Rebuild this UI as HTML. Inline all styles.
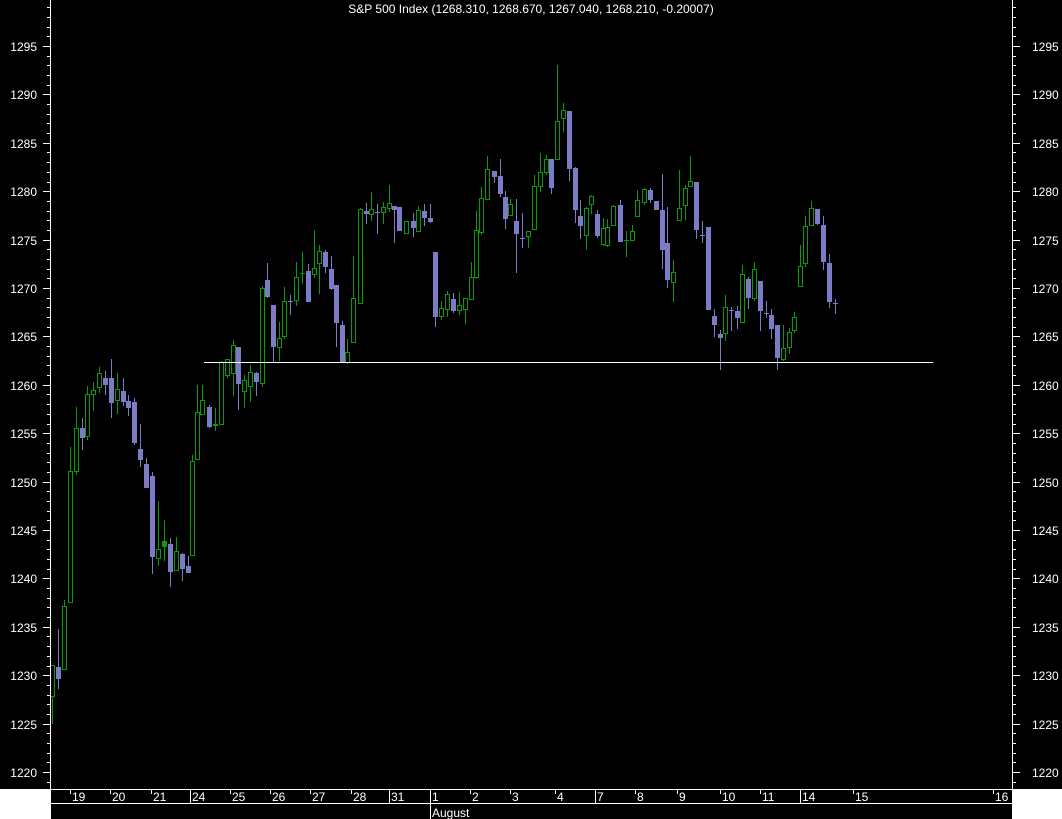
<!DOCTYPE html>
<html><head><meta charset="utf-8"><style>
html,body{margin:0;padding:0;background:#fff;}
svg{display:block;font-family:"Liberation Sans",sans-serif;}
</style></head><body>
<svg id="s" width="1062" height="819" xmlns="http://www.w3.org/2000/svg">
<rect x="0" y="0" width="1062" height="789" fill="#000"/>
<rect x="50" y="789" width="962" height="30" fill="#000"/>
<text x="531" y="13" fill="#fff" font-size="12" text-anchor="middle">S&amp;P 500 Index (1268.310, 1268.670, 1267.040, 1268.210, -0.20007)</text>
<g id="ax" stroke="#fff" stroke-width="1"></g>
<g id="lb" fill="#fff" font-size="12"></g>
<g id="cd"></g>
<line x1="204" y1="362.5" x2="933" y2="362.5" stroke="#fff" stroke-width="1"/>
<g stroke="#fff" stroke-width="1">
<line x1="50" y1="789.5" x2="1012" y2="789.5"/>
<line x1="50" y1="803.5" x2="1012" y2="803.5"/>
<line x1="50.5" y1="0" x2="50.5" y2="819"/>
<line x1="1012.5" y1="0" x2="1012.5" y2="803"/>
</g>
<g id="dt" fill="#fff" font-size="12"></g>
</svg>
<script>
var NS="http://www.w3.org/2000/svg";
function el(p,t,a,txt){var e=document.createElementNS(NS,t);for(var k in a)e.setAttribute(k,a[k]);if(txt!=null)e.textContent=txt;document.getElementById(p).appendChild(e);return e;}
// price axis
for(var p=1299;p>=1219;p--){var y=Math.round(46+(1295-p)*9.68)+0.5;if(y>788)continue;var maj=(p%5==0);
el("ax","line",{x1:maj?43:47,y1:y,x2:50,y2:y});el("ax","line",{x1:1012,y1:y,x2:maj?1020:1016,y2:y});
if(maj){el("lb","text",{x:37,y:y+4.5,"text-anchor":"end"},p);el("lb","text",{x:1032,y:y+4.5},p);}}
// dates
var d=[[70,"19",0],[110,"20",0],[151,"21",0],[190,"24",1],[230,"25",0],[270,"26",0],[310,"27",0],[351,"28",0],[389,"31",1],[430,"1",2],[470,"2",0],[510,"3",0],[555,"4",0],[595,"7",1],[635,"8",0],[677,"9",0],[720,"10",0],[760,"11",0],[800,"14",1],[853,"15",0],[993,"16",0]];
d.forEach(function(a){var x=a[0]+0.5;el("ax","line",{x1:x,y1:789,x2:x,y2:a[2]==2?819:(a[2]==1?803:794)});el("dt","text",{x:a[0]+2,y:801},a[1]);});
el("dt","text",{x:432,y:817},"August");
// candles: x, wickTop, wickBot, bodyTop, bodyBot, type(g/p/t=tick)
var C=[
[52,665,724,665,696,"g"],[58,629,689,667,679,"p"],[64,600,669,606,669,"g"],[70,447,602,471,602,"g"],[76,407,475,428,471,"g"],[82,418,450,428,438,"p"],[87,386,440,394,436,"g"],[93,382,411,390,394,"g"],[99,367,393,373,387,"g"],[105,371,395,378,385,"p"],[111,359,418,378,403,"p"],[117,373,414,389,400,"g"],[123,378,406,391,402,"p"],[128,395,416,401,408,"p"],[134,398,445,402,443,"p"],[140,424,467,449,460,"p"],[146,458,488,464,488,"p"],[152,472,574,476,557,"p"],[158,501,566,549,558,"g"],[164,520,561,541,547,"G"],[170,538,587,544,572,"p"],[176,537,571,551,570,"g"],[182,553,581,554,569,"p"],[188,556,573,566,573,"p"],[192,455,555,461,555,"g"],[197,385,460,412,459,"g"],[202,385,415,400,414,"g"],[209,405,428,407,427,"p"],[215,408,431,424,425,"g"],[221,361,425,362,424,"g"],[227,359,378,359,375,"g"],[233,340,396,345,373,"g"],[238,347,410,347,384,"p"],[244,375,408,380,391,"g"],[250,365,402,372,386,"g"],[256,372,396,373,382,"p"],
[262,286,387,288,383,"g"],[267,263,298,280,297,"p"],[273,305,363,305,347,"p"],[279,322,361,338,347,"g"],[284,287,339,301,336,"g"],[290,295,315,301,301,"t"],[296,262,306,277,300,"g"],[302,252,284,273,273,"tg"],[308,264,302,271,302,"p"],[314,230,278,268,274,"g"],[319,245,294,251,263,"g"],[325,250,273,252,267,"p"],[331,256,290,269,289,"p"],[336,285,347,285,323,"p"],[342,321,362,325,362,"p"],[347,339,364,352,362,"g"],[353,256,343,298,342,"g"],[360,208,303,209,303,"g"],[366,203,224,211,214,"p"],[371,192,221,209,214,"g"],[377,204,234,212,212,"t"],[383,202,224,207,212,"g"],[389,185,212,203,208,"g"],[394,206,243,206,210,"p"],[399,207,231,207,231,"p"],[406,221,233,221,233,"g"],[413,213,237,221,228,"p"],[418,206,232,210,231,"g"],[424,204,226,211,218,"p"],[430,204,223,218,222,"p"],
[435,252,327,252,317,"p"],[441,301,320,308,316,"g"],[447,291,317,294,309,"g"],[453,293,313,299,311,"p"],[459,292,315,305,310,"g"],[465,302,324,298,309,"g"],[471,262,300,277,299,"g"],[476,211,279,230,277,"g"],[481,187,235,198,232,"g"],[487,156,200,169,199,"g"],[494,171,183,171,177,"p"],[500,159,197,176,194,"p"],[505,191,229,197,219,"p"],[510,199,215,204,215,"g"],[516,199,273,221,234,"p"],[522,213,248,238,238,"t"],[528,231,248,231,236,"g"],[534,175,229,186,229,"g"],[540,153,192,172,186,"g"],[546,155,175,159,172,"g"],[551,159,194,159,188,"p"],[557,65,160,121,159,"g"],[563,103,132,110,118,"g"],[569,111,181,111,169,"p"],[575,167,223,168,210,"p"],[580,200,239,216,226,"p"],[586,207,250,208,235,"g"],[591,195,214,196,204,"g"],[597,210,238,214,236,"p"],[603,218,246,228,244,"g"],[607,219,247,227,245,"g"],[613,205,226,206,225,"g"],[620,200,242,205,242,"p"],[626,231,257,240,240,"tg"],[632,225,240,231,240,"g"],[637,190,217,200,216,"g"],[644,188,205,189,202,"g"],[650,188,203,190,200,"p"],[656,201,210,201,210,"p"],
[662,174,269,210,250,"p"],[667,207,288,243,280,"p"],[673,260,302,272,282,"g"],[679,170,221,208,220,"g"],[685,185,220,188,205,"g"],[690,156,186,181,186,"g"],[696,182,239,182,230,"p"],[702,221,243,235,235,"t"],[708,227,310,227,310,"p"],[714,309,337,316,325,"p"],[720,330,370,334,338,"p"],[725,295,341,307,333,"g"],[731,307,331,310,310,"t"],[737,306,329,311,318,"p"],[742,265,323,274,322,"g"],[748,277,309,279,298,"p"],[754,262,301,269,298,"g"],[760,281,331,281,311,"p"],[766,301,318,313,313,"t"],[771,309,339,315,329,"p"],[777,325,370,325,358,"p"],[783,325,361,348,359,"g"],[789,328,354,332,347,"g"],[794,312,333,317,330,"g"],[800,245,287,266,286,"g"],[805,216,267,226,263,"g"],[811,201,226,208,225,"g"],[817,209,225,209,224,"p"],[823,216,270,225,262,"p"],[829,254,308,263,302,"p"],[835,299,314,303,303,"t"]
];
var G="#0a9a0a",P="#7c7cc6";
C.forEach(function(c){var x=c[0],t=c[5];var col=(t[0]=="g"||t=="G"||t=="tg")?G:P;
el("cd","line",{x1:x+0.5,y1:c[1],x2:x+0.5,y2:c[2],stroke:col,"stroke-width":1});
if(t=="t"||t=="tg"){el("cd","line",{x1:x-2,y1:c[3]+0.5,x2:x+3,y2:c[3]+0.5,stroke:col,"stroke-width":1});}
else if(t=="g"){el("cd","rect",{x:x-1.5,y:c[3]+0.5,width:4,height:Math.max(1,c[4]-c[3]),fill:"#000",stroke:G,"stroke-width":1});}
else if(t=="G"){el("cd","rect",{x:x-2,y:c[3],width:5,height:Math.max(1,c[4]-c[3]),fill:G});}
else{el("cd","rect",{x:x-2,y:c[3],width:5,height:Math.max(1,c[4]-c[3]),fill:P});}
});
</script>
</body></html>
